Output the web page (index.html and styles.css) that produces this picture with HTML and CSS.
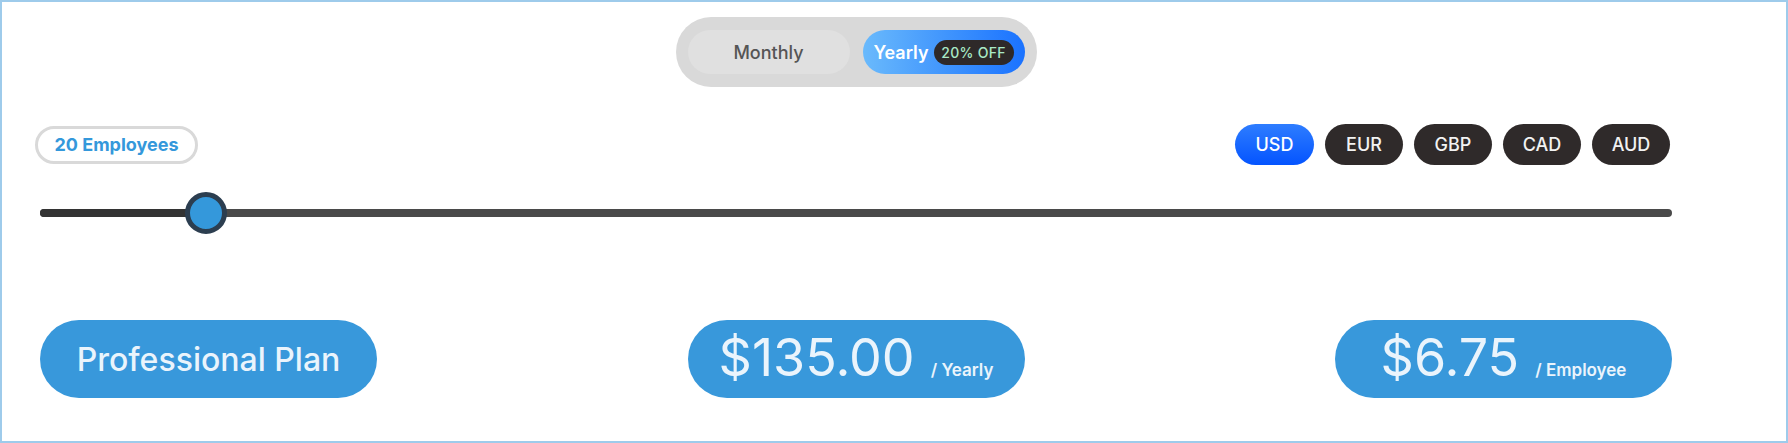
FILE: index.html
```html
<!DOCTYPE html>
<html lang="en">
<head>
<meta charset="utf-8">
<title>Pricing</title>
<link rel="stylesheet" href="styles.css">
</head>
<body>
<div class="frame">
  <div class="content">
    <div class="toggle-row">
      <div class="toggle">
        <button class="toggle-btn monthly">Monthly</button>
        <button class="toggle-btn yearly">Yearly <span class="badge">20% OFF</span></button>
      </div>
    </div>

    <div class="controls-row">
      <div class="employees">20 Employees</div>
      <div class="currencies">
        <button class="cur active">USD</button>
        <button class="cur">EUR</button>
        <button class="cur">GBP</button>
        <button class="cur">CAD</button>
        <button class="cur">AUD</button>
      </div>
    </div>

    <div class="slider">
      <div class="track">
        <div class="fill" style="width: 166px"></div>
      </div>
      <div class="thumb" style="left: 145px"></div>
    </div>

    <div class="plans-row">
      <div class="pill plan">Professional Plan</div>
      <div class="pill price"><span class="amount">$135.00</span><span class="unit">/ Yearly</span></div>
      <div class="pill price"><span class="amount">$6.75</span><span class="unit">/ Employee</span></div>
    </div>
  </div>
</div>
</body>
</html>
```

FILE: styles.css
```css
* { box-sizing: border-box; }

html, body {
  margin: 0;
  padding: 0;
  background: #ffffff;
}

body {
  font-family: Inter, "Noto Sans", "Liberation Sans", sans-serif;
}

.frame {
  width: 1788px;
  height: 443px;
  border: 2px solid #9ecbeb;
  padding-top: 15px;
}

.content {
  width: 1632px;
  margin-left: 38px;
}

.toggle-row {
  display: flex;
  justify-content: center;
}

.toggle {
  display: flex;
  gap: 13px;
  width: 361px;
  height: 70px;
  padding: 13px 12px;
  background: #d9d9d9;
  border-radius: 35px;
}

.toggle-btn {
  width: 162px;
  height: 44px;
  border: none;
  border-radius: 22px;
  font-family: inherit;
  font-size: 18px;
  display: flex;
  align-items: center;
  justify-content: center;
  padding: 0;
}

.monthly {
  background: #e0e0e0;
  color: #555555;
  font-weight: 500;
}

.yearly {
  background: linear-gradient(90deg, #6abafc 0%, #3d92fd 55%, #1a72ff 100%);
  color: #ffffff;
  font-weight: 600;
  gap: 5px;
}

.badge {
  display: inline-flex;
  align-items: center;
  justify-content: center;
  width: 80px;
  height: 25px;
  border-radius: 13px;
  background: #2e2929;
  color: #a9e9c6;
  font-size: 14px;
  font-weight: 500;
  letter-spacing: 0.3px;
}

.controls-row {
  display: flex;
  justify-content: space-between;
  align-items: center;
  margin-top: 37px;
  height: 41px;
}

.employees {
  margin-left: -5px;
  width: 163px;
  height: 38px;
  border: 3px solid #d9d9d9;
  border-radius: 19px;
  color: #3498db;
  font-size: 18px;
  font-weight: 700;
  display: flex;
  align-items: center;
  justify-content: center;
}

.currencies {
  display: flex;
  gap: 11px;
  margin-right: 2px;
}

.cur {
  height: 41px;
  min-width: 78px;
  padding: 0 19px;
  border: none;
  border-radius: 21px;
  background: #2f2a2a;
  color: #f2f2f2;
  font-family: inherit;
  font-size: 18px;
  font-weight: 500;
}

.cur.active {
  min-width: 79px;
  background: linear-gradient(180deg, #2e7dff 0%, #0454ff 100%);
  color: #ffffff;
}

.slider {
  position: relative;
  margin-top: 27px;
  height: 42px;
  display: flex;
  align-items: center;
}

.track {
  width: 100%;
  height: 8px;
  border-radius: 4px;
  background: #4a4a4a;
  overflow: hidden;
}

.fill {
  height: 100%;
  background: #333333;
}

.thumb {
  position: absolute;
  top: 0;
  width: 42px;
  height: 42px;
  border-radius: 50%;
  background: #3498db;
  border: 5px solid #2c3e50;
}

.plans-row {
  display: flex;
  justify-content: space-between;
  margin-top: 86px;
}

.pill {
  height: 78px;
  border-radius: 39px;
  background: #3898db;
  color: #eaf4fc;
  display: flex;
  align-items: center;
  justify-content: center;
}

.plan {
  width: 337px;
  font-size: 32px;
  font-weight: 500;
}

.price {
  width: 337px;
  align-items: baseline;
  padding-top: 12px;
}

.amount {
  font-size: 52px;
  font-weight: 400;
  line-height: 1;
}

.unit {
  margin-left: 16px;
  font-size: 17px;
  font-weight: 600;
}
```
